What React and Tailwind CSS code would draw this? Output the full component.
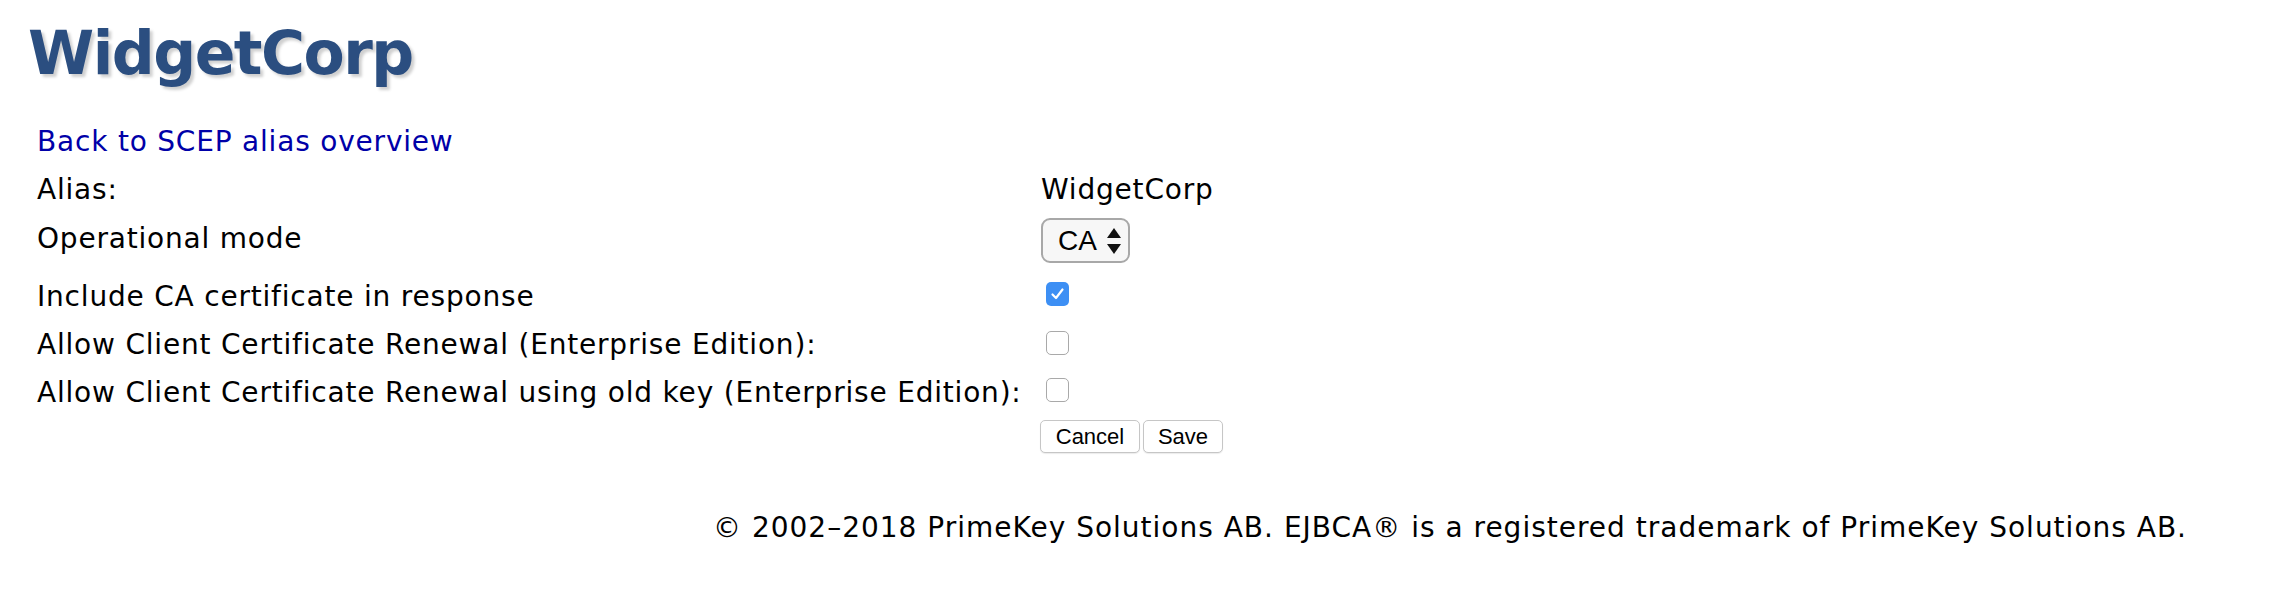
import React from "react";

const font = { fontFamily: '"DejaVu Sans", Verdana, sans-serif' };

function Checkbox({ checked }) {
  if (checked) {
    return (
      <div className="w-[23px] h-[24px] rounded-[5px] bg-[#3d8ff4] flex items-center justify-center">
        <svg width="15" height="14" viewBox="0 0 15 14">
          <path d="M2.5 7.5 L6 11 L12.5 2.5" fill="none" stroke="#fff" strokeWidth="2.2" strokeLinecap="round" strokeLinejoin="round" />
        </svg>
      </div>
    );
  }
  return <div className="w-[23px] h-[24px] rounded-[5px] bg-white border border-[#a9a9a9]" />;
}

function Row({ label, children, className = "h-[48px]", labelClass = "" }) {
  return (
    <div className={`flex items-center ${className}`}>
      <div className={`w-[1004px] shrink-0 ${labelClass}`}>{label}</div>
      <div className="flex items-center">{children}</div>
    </div>
  );
}

export default function App() {
  return (
    <div className="bg-white w-[2278px] h-[600px] text-black text-[28px] leading-[31px] tracking-[0.8px]" style={font}>
      <div className="pl-[28px] pt-[17px] h-[117px]">
        <h1
          className="text-[60px] leading-[72px] font-bold tracking-[-1.5px] text-[#2b4e80] [text-shadow:3px_3px_3px_#d0d0d0]"
          style={font}
        >
          WidgetCorp
        </h1>
      </div>
      <div className="pl-[37px]">
        <div className="flex items-center h-[48px]">
          <a href="#" className="text-[#0000a8]">Back to SCEP alias overview</a>
        </div>
        <Row label="Alias:">
          <span>WidgetCorp</span>
        </Row>
        <Row label="Operational mode" className="h-[59px]" labelClass="mb-[9px]">
          <div className="mb-[4px] w-[89px] h-[45px] rounded-[9px] border-2 border-[#a8a8a8] bg-[#f7f7f7] flex items-center pl-[15px] tracking-normal">
            <span className="text-[28px] leading-[30px]" style={{ fontFamily: '"Liberation Sans", Arial, sans-serif' }}>CA</span>
            <svg className="ml-[9px]" width="16" height="28" viewBox="0 0 16 28">
              <path d="M8 1 L15 11 L1 11 Z" fill="#111" />
              <path d="M1 17 L15 17 L8 27 Z" fill="#111" />
            </svg>
          </div>
        </Row>
        <Row label="Include CA certificate in response">
          <div className="ml-[5px] mb-[4px]"><Checkbox checked /></div>
        </Row>
        <Row label="Allow Client Certificate Renewal (Enterprise Edition):">
          <div className="ml-[5px] mb-[2px]"><Checkbox /></div>
        </Row>
        <Row label="Allow Client Certificate Renewal using old key (Enterprise Edition):">
          <div className="ml-[5px] mb-[4px]"><Checkbox /></div>
        </Row>
        <div className="flex items-center h-[41px]">
          <div className="w-[1003px] shrink-0" />
          <div className="flex gap-[3px] tracking-normal" style={{ fontFamily: '"Liberation Sans", Arial, sans-serif' }}>
            <button className="w-[100px] h-[33px] rounded-[5px] border border-[#c6c6c6] bg-white text-[22px] leading-[24px] shadow-[0_1px_1px_rgba(0,0,0,0.08)]">Cancel</button>
            <button className="w-[80px] h-[33px] rounded-[5px] border border-[#c6c6c6] bg-white text-[22px] leading-[24px] shadow-[0_1px_1px_rgba(0,0,0,0.08)]">Save</button>
          </div>
        </div>
      </div>
      <div className="pl-[713px] pt-[55px] tracking-[1px]">
        © 2002–2018 PrimeKey Solutions AB. EJBCA® is a registered trademark of PrimeKey Solutions AB.
      </div>
    </div>
  );
}
